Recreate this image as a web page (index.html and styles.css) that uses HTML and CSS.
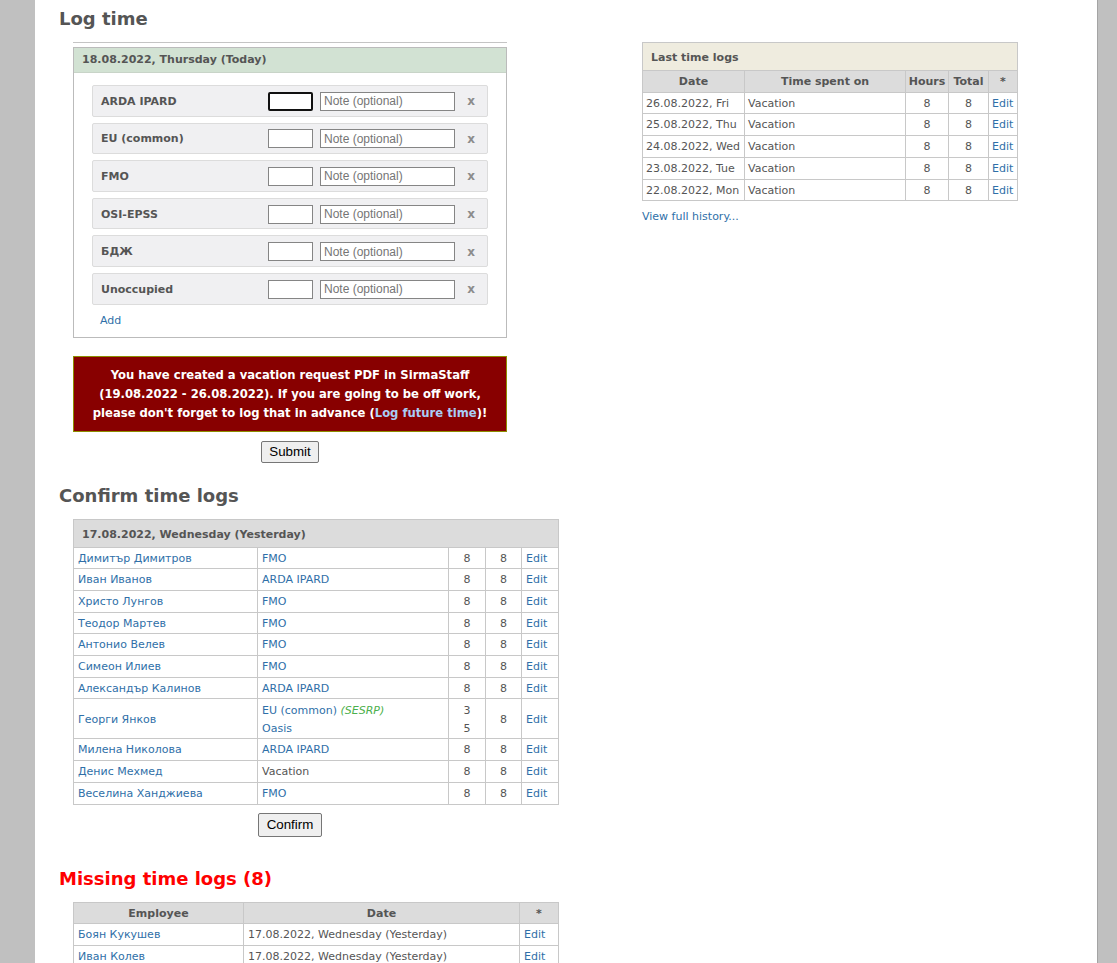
FILE: index.html
```html
<!DOCTYPE html>
<html lang="en">
<head>
<meta charset="utf-8">
<title>Log time</title>
<link rel="stylesheet" href="styles.css">
</head>
<body>
<div class="page">
  <div class="columns">
    <div class="main">
      <h2 class="title">Log time</h2>
      <div class="indent">
        <div class="logform">
          <div class="daybox">
            <div class="dayhead">18.08.2022, Thursday (Today)</div>
            <div class="daybody">
              <div class="entries">
                <div class="entry"><span class="proj">ARDA IPARD</span><input class="hours focused" type="text"><input class="note" type="text" placeholder="Note (optional)"><span class="remove">x</span></div>
                <div class="entry"><span class="proj">EU (common)</span><input class="hours" type="text"><input class="note" type="text" placeholder="Note (optional)"><span class="remove">x</span></div>
                <div class="entry"><span class="proj">FMO</span><input class="hours" type="text"><input class="note" type="text" placeholder="Note (optional)"><span class="remove">x</span></div>
                <div class="entry"><span class="proj">OSI-EPSS</span><input class="hours" type="text"><input class="note" type="text" placeholder="Note (optional)"><span class="remove">x</span></div>
                <div class="entry"><span class="proj">БДЖ</span><input class="hours" type="text"><input class="note" type="text" placeholder="Note (optional)"><span class="remove">x</span></div>
                <div class="entry"><span class="proj">Unoccupied</span><input class="hours" type="text"><input class="note" type="text" placeholder="Note (optional)"><span class="remove">x</span></div>
              </div>
              <div class="add"><a href="#">Add</a></div>
            </div>
          </div>
          <div class="alert">You have created a vacation request PDF in SirmaStaff (19.08.2022 - 26.08.2022). If you are going to be off work, please don't forget to log that in advance (<a href="#">Log future time</a>)!</div>
          <div class="actions"><button type="button">Submit</button></div>
        </div>
      </div>

      <h2 class="title section">Confirm time logs</h2>
      <div class="indent">
        <table class="grid confirm">
          <colgroup><col class="c-name"><col class="c-proj"><col class="c-h"><col class="c-t"><col class="c-e"></colgroup>
          <thead><tr><th colspan="5" class="caption-grey">17.08.2022, Wednesday (Yesterday)</th></tr></thead>
          <tbody>
            <tr><td><a href="#">Димитър Димитров</a></td><td><a href="#">FMO</a></td><td class="num">8</td><td class="num">8</td><td><a href="#">Edit</a></td></tr>
            <tr><td><a href="#">Иван Иванов</a></td><td><a href="#">ARDA IPARD</a></td><td class="num">8</td><td class="num">8</td><td><a href="#">Edit</a></td></tr>
            <tr><td><a href="#">Христо Лунгов</a></td><td><a href="#">FMO</a></td><td class="num">8</td><td class="num">8</td><td><a href="#">Edit</a></td></tr>
            <tr><td><a href="#">Теодор Мартев</a></td><td><a href="#">FMO</a></td><td class="num">8</td><td class="num">8</td><td><a href="#">Edit</a></td></tr>
            <tr><td><a href="#">Антонио Велев</a></td><td><a href="#">FMO</a></td><td class="num">8</td><td class="num">8</td><td><a href="#">Edit</a></td></tr>
            <tr><td><a href="#">Симеон Илиев</a></td><td><a href="#">FMO</a></td><td class="num">8</td><td class="num">8</td><td><a href="#">Edit</a></td></tr>
            <tr><td><a href="#">Александър Калинов</a></td><td><a href="#">ARDA IPARD</a></td><td class="num">8</td><td class="num">8</td><td><a href="#">Edit</a></td></tr>
            <tr class="multi"><td><a href="#">Георги Янков</a></td><td><div class="line"><a href="#">EU (common)</a> <em class="sub">(SESRP)</em></div><div class="line"><a href="#">Oasis</a></div></td><td class="num"><div class="line">3</div><div class="line">5</div></td><td class="num">8</td><td><a href="#">Edit</a></td></tr>
            <tr><td><a href="#">Милена Николова</a></td><td><a href="#">ARDA IPARD</a></td><td class="num">8</td><td class="num">8</td><td><a href="#">Edit</a></td></tr>
            <tr><td><a href="#">Денис Мехмед</a></td><td>Vacation</td><td class="num">8</td><td class="num">8</td><td><a href="#">Edit</a></td></tr>
            <tr><td><a href="#">Веселина Ханджиева</a></td><td><a href="#">FMO</a></td><td class="num">8</td><td class="num">8</td><td><a href="#">Edit</a></td></tr>
          </tbody>
        </table>
        <div class="actions confirm-actions"><button type="button">Confirm</button></div>
      </div>

      <h2 class="title missing">Missing time logs (8)</h2>
      <div class="indent">
        <table class="grid missing-table">
          <colgroup><col class="m-emp"><col class="m-date"><col class="m-e"></colgroup>
          <thead><tr><th>Employee</th><th>Date</th><th>*</th></tr></thead>
          <tbody>
            <tr><td><a href="#">Боян Кукушев</a></td><td>17.08.2022, Wednesday (Yesterday)</td><td><a href="#">Edit</a></td></tr>
            <tr><td><a href="#">Иван Колев</a></td><td>17.08.2022, Wednesday (Yesterday)</td><td><a href="#">Edit</a></td></tr>
            <tr><td><a href="#">Мария Петрова</a></td><td>17.08.2022, Wednesday (Yesterday)</td><td><a href="#">Edit</a></td></tr>
          </tbody>
        </table>
      </div>
    </div>

    <div class="side">
      <table class="grid last">
        <colgroup><col class="l-date"><col class="l-spent"><col class="l-h"><col class="l-t"><col class="l-e"></colgroup>
        <thead>
          <tr><th colspan="5" class="caption-beige">Last time logs</th></tr>
          <tr><th>Date</th><th>Time spent on</th><th>Hours</th><th>Total</th><th>*</th></tr>
        </thead>
        <tbody>
          <tr><td>26.08.2022, Fri</td><td>Vacation</td><td class="num">8</td><td class="num">8</td><td><a href="#">Edit</a></td></tr>
          <tr><td>25.08.2022, Thu</td><td>Vacation</td><td class="num">8</td><td class="num">8</td><td><a href="#">Edit</a></td></tr>
          <tr><td>24.08.2022, Wed</td><td>Vacation</td><td class="num">8</td><td class="num">8</td><td><a href="#">Edit</a></td></tr>
          <tr><td>23.08.2022, Tue</td><td>Vacation</td><td class="num">8</td><td class="num">8</td><td><a href="#">Edit</a></td></tr>
          <tr><td>22.08.2022, Mon</td><td>Vacation</td><td class="num">8</td><td class="num">8</td><td><a href="#">Edit</a></td></tr>
        </tbody>
      </table>
      <div class="history"><a href="#">View full history...</a></div>
    </div>
  </div>
</div>
</body>
</html>
```

FILE: styles.css
```css
html, body {
  margin: 0;
  padding: 0;
}
body {
  background: #c0c0c0;
  font-family: "DejaVu Sans", Verdana, sans-serif;
  font-size: 11px;
  color: #555;
}
a {
  color: #2f6fa8;
  text-decoration: none;
}
.page {
  margin-left: 35px;
  width: 1063px;
  min-height: 100vh;
  box-sizing: border-box;
  background: #fff;
  border-right: 1px solid #a4a4a4;
  padding: 8px 0 0 24px;
}
.columns {
  display: flex;
  align-items: flex-start;
}
.main {
  width: 583px;
  flex: none;
}
.side {
  width: 375px;
  flex: none;
  padding-top: 34px;
}
.title {
  margin: 0 0 12px;
  font-size: 18px;
  line-height: 22px;
  font-weight: bold;
  color: #555;
}
.title.section {
  margin-top: 22px;
}
.title.missing {
  margin-top: 31px;
  color: #f00;
}
.indent {
  margin-left: 14px;
}
.logform {
  width: 434px;
  border-top: 1px solid #c4c4c4;
  padding-top: 4px;
}
.daybox {
  border: 1px solid #bbb;
}
.dayhead {
  background: #d2e2d3;
  border-bottom: 1px solid #c8d4c8;
  font-weight: bold;
  line-height: 24px;
  padding-left: 8px;
}
.daybody {
  padding: 12px 18px 9px 18px;
}
.entries {
  display: flex;
  flex-direction: column;
  gap: 6px;
}
.entry {
  display: flex;
  align-items: center;
  height: 31.6px;
  box-sizing: border-box;
  background: #f0f0f2;
  border: 1px solid #dcdcdc;
  border-radius: 2px;
  padding-left: 8px;
  padding-top: 1px;
}
.proj {
  flex: 1;
  font-weight: bold;
}
.entry input {
  box-sizing: border-box;
  height: 19px;
  margin: 0;
  padding: 1px 3px;
  border: 1px solid #858585;
  background: #fff;
  font-family: "Liberation Sans", Arial, sans-serif;
  font-size: 12px;
  color: #333;
  outline: none;
}
.entry input::placeholder {
  color: #757575;
}
.entry .hours {
  width: 45px;
}
.entry .hours.focused {
  border: 2px solid #111;
  border-radius: 2px;
}
.entry .note {
  width: 135px;
  margin-left: 7px;
}
.remove {
  width: 32px;
  text-align: center;
  font-weight: bold;
  font-size: 12px;
  color: #8c8c8c;
}
.add {
  padding: 9px 0 0 8px;
  line-height: 14px;
}
.alert {
  margin-top: 18px;
  background: #880000;
  border: 1px solid #8d8d00;
  color: #fff;
  font-weight: bold;
  font-size: 11.6px;
  line-height: 19px;
  text-align: center;
  padding: 9px 12px 8px;
}
.alert a {
  color: #a9cdf5;
}
.actions {
  width: 434px;
  text-align: center;
  margin-top: 9px;
}
.actions button {
  font-family: "Liberation Sans", Arial, sans-serif;
  font-size: 13.33px;
  color: #000;
  background: #efefef;
  border: 1px solid #767676;
  border-radius: 2px;
  padding: 2px 7px;
  height: 22px;
}
.confirm-actions {
  margin-top: 8px;
}
.confirm-actions button {
  height: 24px;
  padding: 2px 8px;
}
.grid {
  border-collapse: collapse;
  table-layout: fixed;
  border: 1px solid #c8c8c8;
}
.grid td, .grid th {
  border: 1px solid #c8c8c8;
  padding: 3px 4px 1px;
  line-height: 16.7px;
  text-align: left;
  white-space: nowrap;
  overflow: hidden;
}
.grid th {
  background: #dcdcdc;
  font-weight: bold;
  text-align: center;
  padding: 3px 2px 1px;
}
.grid td.num {
  text-align: center;
}
.grid th.caption-grey,
.grid th.caption-beige {
  text-align: left;
  padding: 6px 8px 4px;
  line-height: 17px;
}
.grid th.caption-beige {
  background: #efecdf;
}
.confirm {
  width: 485px;
}
.c-name { width: 184px; }
.c-proj { width: 191px; }
.c-h { width: 37px; }
.c-t { width: 36px; }
.c-e { width: 37px; }
.multi td {
  padding-top: 3px;
  padding-bottom: 1px;
}
.multi .line {
  line-height: 17.5px;
}
.sub {
  color: #4cb04c;
}
.missing-table {
  width: 485px;
}
.m-emp { width: 170px; }
.m-date { width: 276px; }
.m-e { width: 39px; }
.last {
  width: 375px;
}
.l-date { width: 102px; }
.l-spent { width: 161px; }
.l-h { width: 43px; }
.l-t { width: 40px; }
.l-e { width: 29px; }
.last td {
  padding-left: 3px;
  padding-right: 3px;
}
.history {
  margin-top: 7px;
  line-height: 17px;
}
```
